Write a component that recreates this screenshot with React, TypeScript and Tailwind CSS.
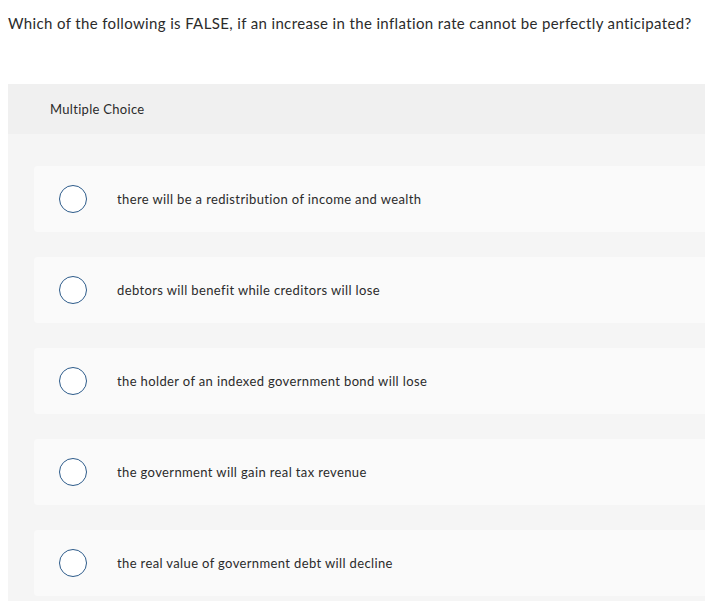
const options = [
  "there will be a redistribution of income and wealth",
  "debtors will benefit while creditors will lose",
  "the holder of an indexed government bond will lose",
  "the government will gain real tax revenue",
  "the real value of government debt will decline",
];

export default function App() {
  return (
    <div className="min-h-[601px] bg-white font-['Lato',sans-serif] text-[#2b2b2b]">
      <p className="pl-[8px] pt-[13px] text-[15px] leading-[20px] tracking-[0.36px]">
        Which of the following is FALSE, if an increase in the inflation rate cannot be perfectly anticipated?
      </p>
      <div className="ml-[8px] mt-[51px] bg-[#f5f5f5]">
        <div className="flex h-[50px] items-center bg-[#f0f0f0] pl-[42px] pt-[2px] text-[13px] tracking-[0.3px]">
          Multiple Choice
        </div>
        <div className="flex flex-col gap-[25px] pb-[10px] pl-[26px] pt-[32px]">
          {options.map((o) => (
            <div key={o} className="flex h-[66px] items-center rounded-l-[4px] bg-[#fafafa] pl-[25px]">
              <span className="h-[28px] w-[28px] shrink-0 rounded-full border-[1.5px] border-[#2d5b8a] bg-white" />
              <span className="pl-[30px] pt-[2px] text-[13px] tracking-[0.37px]">{o}</span>
            </div>
          ))}
        </div>
      </div>
    </div>
  );
}
